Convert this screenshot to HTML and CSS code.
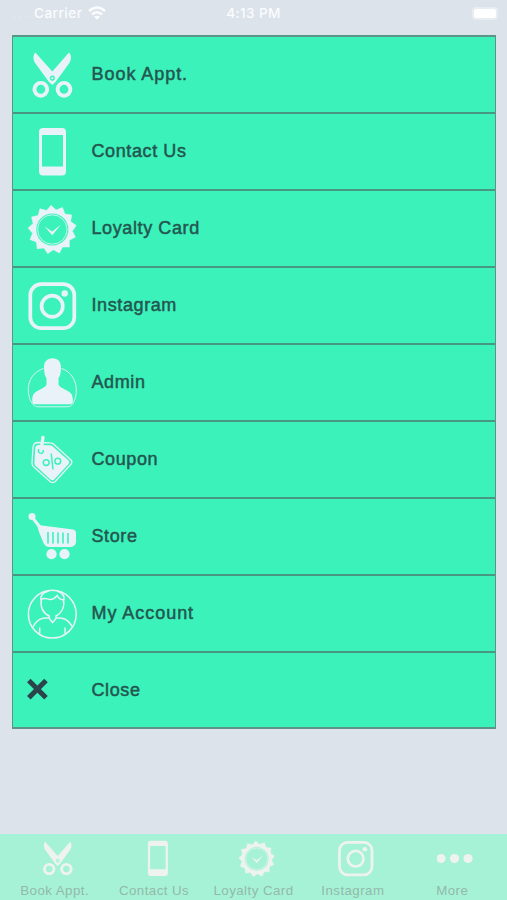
FILE: index.html
```html
<!DOCTYPE html>
<html lang="en">
<head>
<meta charset="utf-8">
<title>Menu</title>
<link rel="stylesheet" href="styles.css">
</head>
<body>
<svg class="defs" width="0" height="0">
  <symbol id="scissors" viewBox="0 0 50 50">
    <path fill="currentColor" fill-rule="evenodd" d="M8.300 2.500 L25.300 21.500 L42 2.500 C44.800 5.500 44.500 10 42 13.500 L28.500 32 L25.300 35 L22 32 L8.500 13.500 C6 10 5.700 5.500 8.300 2.500 Z M25.300 25.500a2.600 2.600 0 1 0 .1 0Z"/>
    <circle cx="25.300" cy="28.200" r="1.100" fill="currentColor"/>
    <g fill="none" stroke="currentColor" stroke-width="3.900"><circle cx="13.800" cy="39.300" r="6.400"/><circle cx="37" cy="39.300" r="6.400"/></g>
  </symbol>
  <symbol id="phone" viewBox="0 0 50 50">
    <path fill="currentColor" fill-rule="evenodd" d="M16 1h19a4 4 0 0 1 4 4v39.500a4 4 0 0 1-4 4H16a4 4 0 0 1-4-4V5a4 4 0 0 1 4-4Z M15 8v31.500h21V8Z"/>
  </symbol>
  <symbol id="seal" viewBox="0 0 50 50">
    <path fill="currentColor" stroke="currentColor" stroke-width=".6" stroke-linejoin="round" fill-rule="evenodd" d="M24 1.400L29.100 6.100L35.500 3.600L37.800 10.100L44.600 10.900L43.600 17.600L49.200 21.500L45.300 27.100L48.400 33.100L42.300 36.200L42.300 43L35.500 42.900L32.400 49L26.300 45.700L20.700 49.600L16.900 43.900L10.200 44.700L9.500 37.900L3.100 35.500L5.600 29.200L1.100 24.100L6.200 19.600L4.600 13L11.300 11.500L12.900 4.800L19.500 6.600Z M25.300 9.200a16.300 16.300 0 1 0 .1 0Z"/>
    <circle cx="25.300" cy="25.500" r="14.700" fill="none" stroke="currentColor" stroke-width=".8"/>
    <path fill="currentColor" d="M17.500 22.500L25.300 27.500L34 20.500L25.300 31.200Z"/>
  </symbol>
  <symbol id="instagram" viewBox="0 0 50 50">
    <g fill="none" stroke="currentColor" stroke-width="3.700"><rect x="3.300" y="3.200" width="44" height="44" rx="11"/><circle cx="25.200" cy="25.200" r="10.600"/></g>
    <circle cx="37.700" cy="12.500" r="3.200" fill="currentColor"/>
  </symbol>
  <symbol id="admin" viewBox="0 0 50 50">
    <path fill="none" stroke="currentColor" stroke-width=".9" d="M16.500 10.500C6 14 1.300 22.500 1.300 31.500C1.300 39 4 45.500 8 48Q9 48.800 12 48.800H39Q42 48.800 43.500 48C47 45.500 49.300 39 49.300 32C49.300 22.500 44 13.500 34.500 10.500"/>
    <path fill="currentColor" d="M25.500 .3C31 .3 34.200 4 34 10C34 15 33 18 31.500 20.300V26.500C33 30.500 42.500 32 45 37Q46.500 42 45.500 45.200Q44.700 46.300 42 46.300H9Q6 46.300 5.500 45Q4.500 41 6 37C9 32 18 30.500 19.500 26.500V20.300C17.800 18 17 14 17 9C17 4 20 .3 25.500 .3Z"/>
  </symbol>
  <symbol id="coupon" viewBox="0 0 50 50">
    <path fill="none" stroke="currentColor" stroke-width="1.300" stroke-linejoin="round" d="M10 7.500L23 7.800Q25 7.800 26.500 9L44 25Q45.700 27 44.200 29L28 46.700Q25.500 48.500 23 46.600L6.300 31.500Q5 30 5 28L6 12.500Q6.500 8 10 7.500Z"/>
    <path fill="currentColor" d="M11 10L22.500 10.300Q24.500 10.300 25.500 11.200L41.800 25.800Q43 27.300 41.800 28.800L27 44.700Q25.300 46 23.500 44.600L8.300 30.500Q7.300 29.300 7.400 27.500L8.300 12.500Q9 10.200 11 10Z"/>
    <g class="cut" fill="none" stroke-width="1.500"><path d="M11.500 14v2.800q2.500 3 4.700 .3v-2M24.200 18.500L26 34.500"/><circle cx="19.200" cy="27.600" r="2.900"/><circle cx="30.800" cy="26.200" r="2.900"/></g>
    <path stroke="currentColor" stroke-width="3.300" stroke-linecap="round" d="M16 2.300L14.500 12"/>
  </symbol>
  <symbol id="cart" viewBox="0 0 50 50">
    <circle cx="5" cy="4.500" r="3.500" fill="currentColor"/><path stroke="currentColor" stroke-width="3" d="M5 5L14 16.500"/>
    <path fill="currentColor" d="M10 13L15 13.500L46 17.500Q49 18 49 21V30.500Q48.500 33 46.500 34Q45.500 35 43 35H22Q18.500 35 16.500 31L12 20Z"/>
    <g class="cut" stroke-width="1.600"><path d="M21 20v11.500M26 20v11.500M31 20.500v11M36 20.500v11M41 21v10.500"/></g>
    <circle cx="24.500" cy="42.200" r="5.100" fill="currentColor"/><circle cx="37.500" cy="42.200" r="5.100" fill="currentColor"/>
  </symbol>
  <symbol id="account" viewBox="0 0 50 50">
    <g fill="none" stroke="currentColor" stroke-width="1.500"><circle cx="25.300" cy="25.200" r="23.900"/><path d="M14.300 10.500C17 8.300 19 9.500 22 10.300C26 11.200 29 8 30.300 6.500C31 9 33.500 10.500 36.500 11M14.300 12C12.500 7 16 3 22 2M36.500 12C38.500 7 35 3.500 30 2M14.300 10.500C13 20 18 25 22.300 27V29.500L25.500 33.500L29 29.500V27C33.500 24.500 38 19 36.500 11M22.300 29C15 28.500 10 30 6 38M29 29C36 28.500 41 30 45 37.500M12.700 38.500v6M38 38.500v6"/></g>
  </symbol>
</svg>
<div class="screen">
  <header class="status">
    <div class="carrier"><span class="signal"><i></i><i></i><i></i><i></i></span><span class="carrier-name">Carrier</span>
      <svg class="wifi" viewBox="0 0 18 14"><g fill="none" stroke="currentColor" stroke-width="2.600"><path d="M1 5Q9-2 17 5M4 8.500Q9 4 14 8.500"/></g><path fill="currentColor" d="M6 10.800Q9 8.500 12 10.800L9 13.800Z"/></svg>
    </div>
    <span class="time">4:13 PM</span>
    <span class="battery"><i></i></span>
  </header>
  <main class="menu">
    <div class="row"><svg class="icon"><use href="#scissors"/></svg><span class="wide">Book Appt.</span></div>
    <div class="row"><svg class="icon"><use href="#phone"/></svg><span>Contact Us</span></div>
    <div class="row"><svg class="icon"><use href="#seal"/></svg><span>Loyalty Card</span></div>
    <div class="row"><svg class="icon"><use href="#instagram"/></svg><span>Instagram</span></div>
    <div class="row"><svg class="icon"><use href="#admin"/></svg><span>Admin</span></div>
    <div class="row"><svg class="icon"><use href="#coupon"/></svg><span>Coupon</span></div>
    <div class="row"><svg class="icon"><use href="#cart"/></svg><span>Store</span></div>
    <div class="row"><svg class="icon"><use href="#account"/></svg><span class="wide">My Account</span></div>
    <div class="row"><svg class="icon close" viewBox="0 0 50 50"><path d="M1.800 15.500L19 32.700M19 15.500L1.800 32.700"/></svg><span>Close</span></div>
  </main>
  <nav class="tabs">
    <div class="tab"><svg><use href="#scissors"/></svg><span>Book Appt.</span></div>
    <div class="tab"><svg><use href="#phone"/></svg><span>Contact Us</span></div>
    <div class="tab"><svg><use href="#seal"/></svg><span>Loyalty Card</span></div>
    <div class="tab"><svg><use href="#instagram"/></svg><span>Instagram</span></div>
    <div class="tab"><svg viewBox="0 0 37 37"><g fill="currentColor"><circle cx="4" cy="18.500" r="4.600"/><circle cx="17.500" cy="18.500" r="4.600"/><circle cx="31" cy="18.500" r="4.600"/></g></svg><span>More</span></div>
  </nav>
</div>
</body>
</html>
```
FILE: styles.css
```css
* { box-sizing: border-box; }
body { margin: 0; background: #dce3eb; font-family: "Liberation Sans", Arial, sans-serif; }
.defs { display: block; height: 0; }
.screen { height: 900px; display: flex; flex-direction: column; overflow: hidden; }
.status { height: 35px; padding: 0 9px 9px 14px; display: grid; grid-template-columns: 1fr auto 1fr; align-items: center; color: #fbfcfd; font: 500 13.5px Inter, sans-serif; letter-spacing: .4px; }
.carrier { display: flex; align-items: center; }
.carrier-name { letter-spacing: .5px; }
.signal { display: flex; gap: 3px; width: 20px; padding-top: 8px; }
.signal i { width: 2px; height: 2px; border-radius: 50%; background: #e3e9ef; }
.wifi { width: 18px; height: 14px; margin-left: 6px; }
.time { margin-right: 5px; }
.battery { justify-self: end; width: 26px; height: 13px; padding: 2px; border-radius: 4px; background: #e8edf2; }
.battery i { display: block; width: 22px; height: 9px; border-radius: 2.500px; background: #fff; }
.menu { margin: 0 11px 0 12px; border: 2px solid #5c9488; border-width: 2px 1.500px; background: #3bf3ba; }
.row { height: 77px; display: flex; align-items: center; padding-left: 14px; border-bottom: 2px solid #469784; color: #245650; font-size: 18px; letter-spacing: .6px; -webkit-text-stroke: .5px #245650; }
.row:first-child { height: 77px; }
.row:last-child { height: 74px; border-bottom: 0; }
.row .wide { letter-spacing: .95px; }
.icon { width: 50px; height: 50px; margin-right: 14.500px; color: #e9f2f8; -webkit-text-stroke: 0; flex: none; }
.close { fill: none; stroke: #2b434a; stroke-width: 5; overflow: visible; }
.cut { stroke: #3bf3ba; }
.tabs { height: 66px; margin-top: auto; padding: 5px 5px 0; display: grid; grid-template-columns: repeat(5, 1fr); background: #a6f2d6; }
.tab { display: flex; flex-direction: column; align-items: center; color: #93b9ab; font-size: 13.3px; white-space: nowrap; letter-spacing: .45px; }
.tab svg { width: 37px; height: 37px; color: #eef3ef; margin: 1px 0 6px 6px; }
.tab .cut { stroke: #a6f2d6; }
```
